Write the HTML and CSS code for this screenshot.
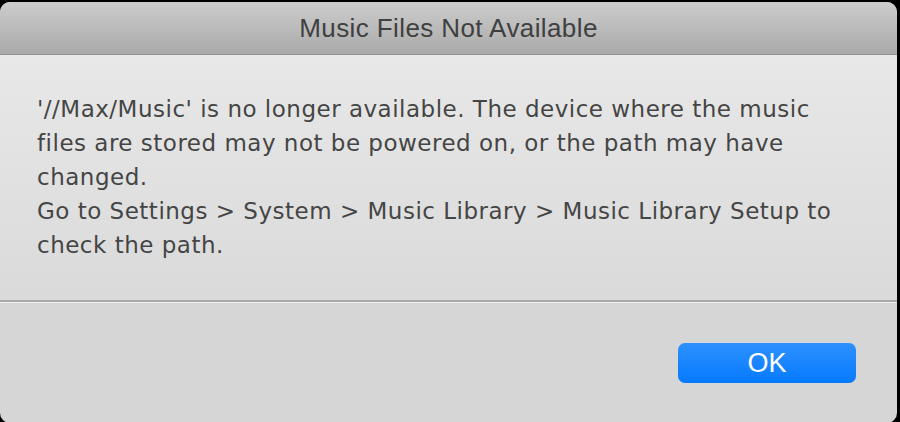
FILE: index.html
```html
<!DOCTYPE html>
<html lang="en">
<head>
  <meta charset="UTF-8">
  <title>Music Files Not Available</title>
  <link rel="stylesheet" href="styles.css">
</head>
<body>

  <div class="dialog">
    <div class="titlebar">Music Files Not Available</div>

    <div class="message">
      <p>'//Max/Music' is no longer available. The device where the music files are stored may not be powered on, or the path may have changed.</p>
      <p>Go to Settings &gt; System &gt; Music Library &gt; Music Library Setup to check the path.</p>
    </div>

    <div class="actions">
      <button class="btn-ok" type="button">OK</button>
    </div>
  </div>

</body>
</html>
```

FILE: styles.css
```css
html, body {
  margin: 0;
  height: 100%;
  background: #000;
  overflow: hidden;
}

body {
  font-family: "Liberation Sans", Arial, sans-serif;
}

.dialog {
  width: 897px;
  height: 421px;
  margin-top: 2px;
  border-radius: 10px;
  overflow: hidden;
  display: flex;
  flex-direction: column;
  background: #d6d6d6;
}

.titlebar {
  height: 52px;
  flex: none;
  display: flex;
  align-items: center;
  justify-content: center;
  background: linear-gradient(#cdcdcd, #a9a9a9);
  border-bottom: 1px solid #939393;
  color: #404040;
  font-size: 26px;
  letter-spacing: 0.4px;
}

.message {
  height: 247px;
  flex: none;
  box-sizing: border-box;
  padding: 37px 37px 0 37px;
  background: linear-gradient(#e8e8e8, #dadada);
  border-bottom: 2px solid #a8a8a8;
  box-shadow: 0 1px 0 #efefef;
  color: #454545;
  font-family: "DejaVu Sans", sans-serif;
  font-size: 23px;
  letter-spacing: 0.5px;
  line-height: 34px;
}

.message p {
  margin: 0;
  max-width: 800px;
}

.actions {
  display: flex;
  justify-content: flex-end;
  padding: 41px 41px 0 0;
}

.btn-ok {
  width: 178px;
  height: 40px;
  border: none;
  border-radius: 7px;
  background: linear-gradient(#2d91fd, #067aff);
  color: #fff;
  font-family: "Liberation Sans", Arial, sans-serif;
  font-size: 27px;
  padding: 0;
}
```
